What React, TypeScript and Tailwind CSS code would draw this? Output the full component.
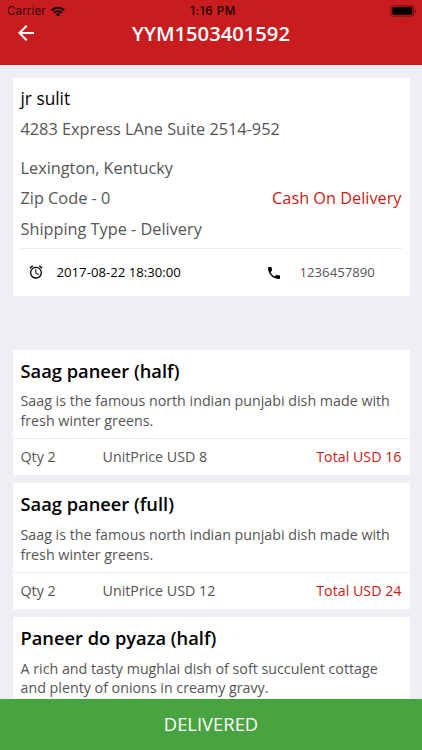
import { MdAlarm, MdArrowBack, MdPhone } from "react-icons/md";

type OrderItem = {
  id: number;
  name: string;
  description: string[];
  total: { qty: number; unitPrice: number } | null;
};

const items: OrderItem[] = [
  {
    id: 1,
    name: "Saag paneer (half)",
    description: [
      "Saag is the famous north indian punjabi dish made with",
      "fresh winter greens.",
    ],
    total: { qty: 2, unitPrice: 8 },
  },
  {
    id: 2,
    name: "Saag paneer (full)",
    description: [
      "Saag is the famous north indian punjabi dish made with",
      "fresh winter greens.",
    ],
    total: { qty: 2, unitPrice: 12 },
  },
  {
    id: 3,
    name: "Paneer do pyaza (half)",
    description: [
      "A rich and tasty mughlai dish of soft succulent cottage",
      "and plenty of onions in creamy gravy.",
    ],
    total: null,
  },
];

function StatusBar() {
  return (
    <div className="relative flex h-[22px] items-center justify-between pl-[7px] pr-[5px] font-['Inter',sans-serif] text-[11.5px] text-black/80">
      <div className="flex items-center gap-[5px] pt-px">
        <span className="tracking-[0.15px]">Carrier</span>
        <svg width="14" height="11" viewBox="0 0 14 11" fill="none">
          <path d="M0.8 4.3a8.7 8.7 0 0 1 12.4 0" stroke="black" strokeWidth="2.1" />
          <path d="M3.1 6.8a5.4 5.4 0 0 1 7.8 0" stroke="black" strokeWidth="2" />
          <path d="M7 10.6L4.8 8.4a3 3 0 0 1 4.4 0z" fill="black" />
        </svg>
      </div>
      <span className="absolute top-[3px] left-[190px] font-semibold tracking-[0.6px]">1:16 PM</span>
      <svg width="27" height="12" viewBox="0 0 27 12" fill="none">
        <rect x="0.9" y="0.9" width="22.8" height="10.2" rx="2" stroke="black" strokeOpacity="0.5" />
        <rect x="2.3" y="2.3" width="20" height="7.4" rx="0.8" fill="black" />
        <path d="M25 4.2c1.7.8 1.7 2.8 0 3.6z" fill="black" fillOpacity="0.5" />
      </svg>
    </div>
  );
}

function Header({ title }: { title: string }) {
  return (
    <header className="h-[65px] shrink-0 bg-[#c91c1f]">
      <StatusBar />
      <div className="grid h-[23px] grid-cols-[52px_1fr_52px] items-center">
        <button className="flex justify-center text-white">
          <MdArrowBack size={24} className="-mt-px" />
        </button>
        <h1 className="text-center text-[20.2px] leading-[23px] font-semibold text-white">{title}</h1>
      </div>
    </header>
  );
}

function Customer() {
  return (
    <section className="mx-[12.5px] mt-[13px] h-[218px] shrink-0 bg-white px-2 text-[16.3px] text-[#555]">
      <p className="pt-[9px] text-[17.3px] leading-6 text-black">jr sulit</p>
      <p className="mt-[6px] leading-6">4283 Express LAne Suite 2514-952</p>
      <p className="mt-[15px] leading-6">Lexington, Kentucky</p>
      <div className="mt-[6px] flex justify-between leading-6">
        <p>Zip Code - 0</p>
        <p className="text-[#c91c14]">Cash On Delivery</p>
      </div>
      <p className="mt-[7px] leading-6">Shipping Type - Delivery</p>
      <div className="mt-[7px] flex h-[48px] items-center border-t border-[#ececec] text-[13.2px]">
        <div className="flex w-[245px] items-center pl-[7px] text-black">
          <MdAlarm size={16} />
          <span className="ml-[13px] pt-px">2017-08-22 18:30:00</span>
        </div>
        <MdPhone size={16} className="text-black" />
        <span className="ml-[18px] pt-px">1236457890</span>
      </div>
    </section>
  );
}

function Item({ item }: { item: OrderItem }) {
  return (
    <li className="shrink-0 bg-white text-[14.25px] text-[#555]">
      <div className="h-[88.5px] px-2 pt-[7px]">
        <h2 className="text-[18.3px] leading-[27px] font-semibold text-black">{item.name}</h2>
        <div className="mt-[7.8px] leading-[19.5px]">
          {item.description.map((line) => (
            <p key={line} className="whitespace-nowrap">
              {line}
            </p>
          ))}
        </div>
      </div>
      {item.total && (
        <div className="flex h-[37px] items-center border-t border-[#ececec] px-2">
          <span className="w-[82px]">Qty {item.total.qty}</span>
          <span>UnitPrice USD {item.total.unitPrice}</span>
          <span className="ml-auto text-[#c91c14]">
            Total USD {item.total.qty * item.total.unitPrice}
          </span>
        </div>
      )}
    </li>
  );
}

export default function App() {
  return (
    <div className="flex h-[750px] w-[422px] flex-col overflow-hidden bg-[#efeef5] font-['Open_Sans',sans-serif]">
      <Header title="YYM1503401592" />
      <main className="flex min-h-0 flex-1 flex-col overflow-hidden">
        <Customer />
        <ul className="mx-[12.5px] mt-[53.5px] flex flex-col gap-[8.25px]">
          {items.map((item) => (
            <Item key={item.id} item={item} />
          ))}
        </ul>
      </main>
      <button className="h-[51.5px] shrink-0 bg-[#48a341] text-[18.4px] text-white">DELIVERED</button>
    </div>
  );
}
